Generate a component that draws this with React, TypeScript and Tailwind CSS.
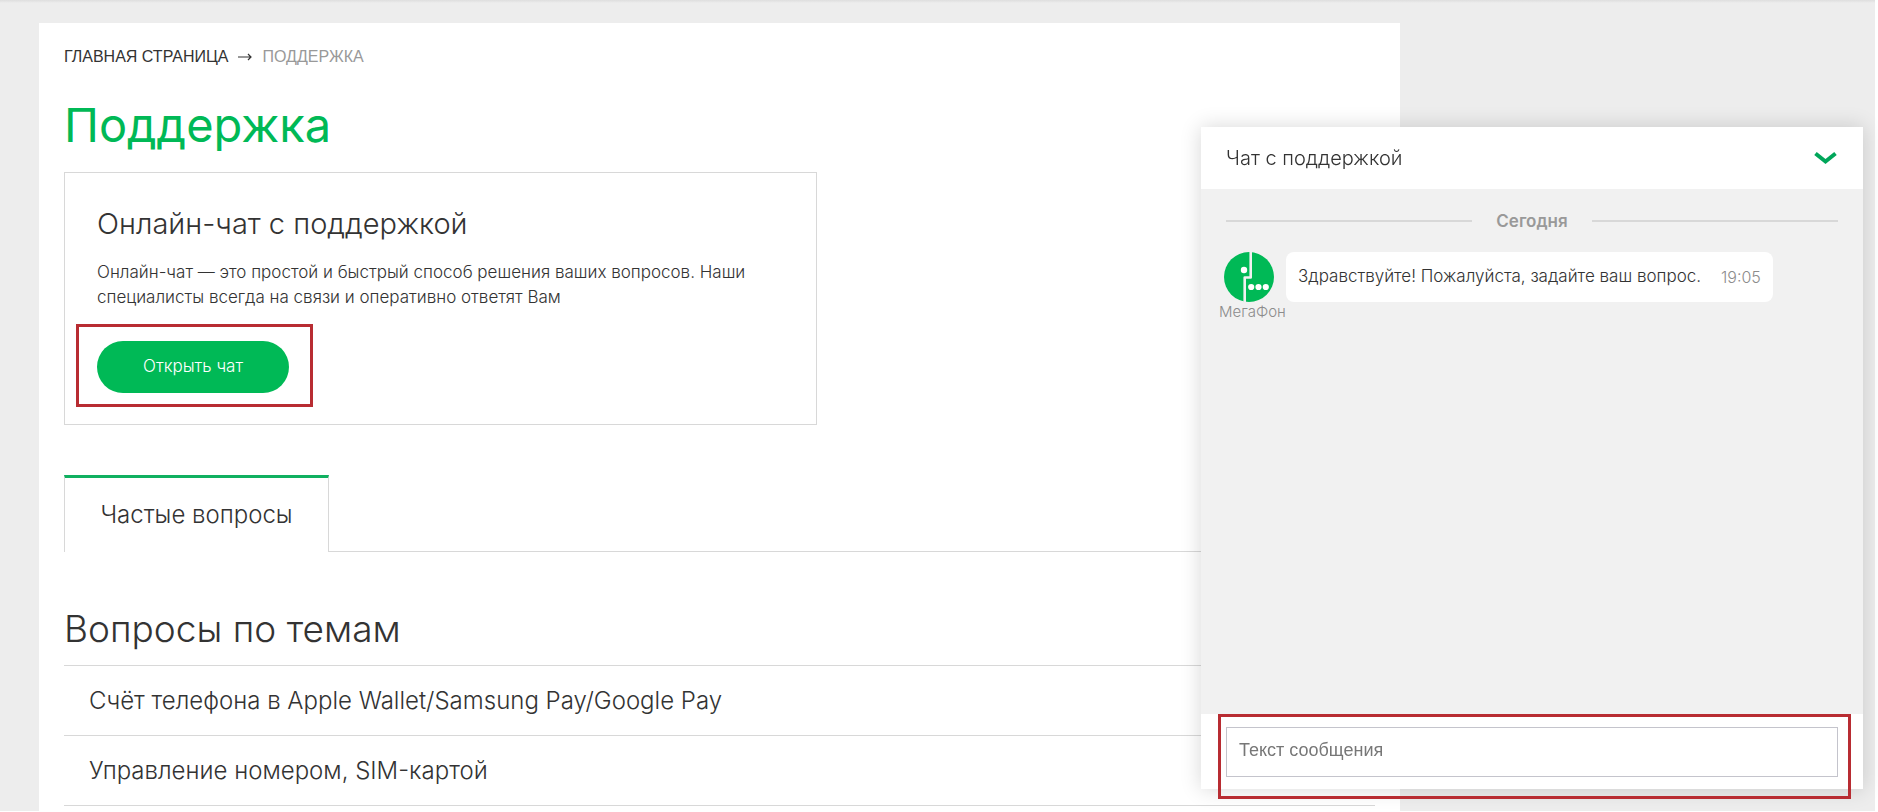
import React, { useState } from "react";

const topics = [
  "Счёт телефона в Apple Wallet/Samsung Pay/Google Pay",
  "Управление номером, SIM-картой",
];

const MegafonLogo = () => (
  <svg viewBox="0 0 50 50" className="ml-[5px] size-[50px]" aria-hidden="true">
    <circle cx="25" cy="25" r="25" fill="#00b956" />
    <path
      d="M26.7 0V25.5H20.7V50"
      fill="none"
      stroke="#f1f1f1"
      strokeWidth="2.6"
      strokeLinejoin="round"
    />
    <circle cx="20" cy="18" r="3.2" fill="#fff" />
    <circle cx="27.2" cy="35" r="3.1" fill="#fff" />
    <circle cx="34.5" cy="35" r="3.1" fill="#fff" />
    <circle cx="41.8" cy="35" r="3.1" fill="#fff" />
  </svg>
);

const Breadcrumbs = () => (
  <nav className="flex items-center gap-2.5 font-['Liberation_Sans',sans-serif] text-base leading-6 uppercase">
    <a href="#home">Главная страница</a>
    <svg viewBox="0 0 14 8" className="h-2 w-3.5" aria-hidden="true">
      <path
        d="M0 4H13M10 1L13 4L10 7"
        fill="none"
        stroke="#333"
        strokeWidth="1.2"
      />
    </svg>
    <span className="text-[#999]">Поддержка</span>
  </nav>
);

const ChatCard = () => (
  <section className="mt-4 w-full max-w-[753px] border border-[#d8d8d8] px-8 py-[31px]">
    <h2 className="text-[29px] leading-10 font-light">
      Онлайн-чат с поддержкой
    </h2>
    <p className="mt-4 text-[17px] leading-[25px] font-light">
      Онлайн-чат — это простой и быстрый способ решения ваших вопросов. Наши
      специалисты всегда на связи и оперативно ответят Вам
    </p>
    <div className="relative mt-[31px] w-fit">
      <button
        type="button"
        className="block h-[52px] w-48 rounded-full bg-[#00b956] text-[17px] font-light text-white"
      >
        Открыть чат
      </button>
      <div className="pointer-events-none absolute -top-[17px] -right-6 -bottom-3.5 -left-[21px] border-3 border-[#b82c32]" />
    </div>
  </section>
);

const ChatWidget = () => {
  const [message, setMessage] = useState("");

  return (
    <aside className="fixed right-[15px] bottom-[23px] flex h-[662px] w-[662px] flex-col bg-white shadow-[0_0_20px_rgba(0,0,0,0.16)]">
      <header className="flex h-[62px] shrink-0 items-center justify-between px-[25px]">
        <h2 className="text-xl font-light">Чат с поддержкой</h2>
        <button type="button" aria-label="Свернуть чат">
          <svg viewBox="0 0 24 14" className="h-3.5 w-6" aria-hidden="true">
            <path
              d="M1.5 2.5L11.5 10.5L21.5 2.5"
              fill="none"
              stroke="#00a65a"
              strokeWidth="4"
            />
          </svg>
        </button>
      </header>

      <div className="grow bg-[#f1f1f1] pt-5">
        <div className="flex items-center gap-6 px-[25px] text-[17px] leading-6 font-semibold text-[#999]">
          <span className="h-0.5 grow bg-[#d8d8d8]" />
          Сегодня
          <span className="h-0.5 grow bg-[#d8d8d8]" />
        </div>
        <div className="mt-[19px] flex items-start pl-[18px]">
          <div className="flex w-[67px] flex-col">
            <MegafonLogo />
            <span className="text-[15px] leading-5 font-light text-[#8c8c8c]">
              МегаФон
            </span>
          </div>
          <p className="flex h-[50px] items-center gap-5 rounded-lg bg-white px-3 text-[17px] font-light">
            Здравствуйте! Пожалуйста, задайте ваш вопрос.
            <time className="text-base text-[#8c8c8c]">19:05</time>
          </p>
        </div>
      </div>

      <form className="relative h-[75px] shrink-0 px-[25px] pt-[13px]">
        <input
          type="text"
          aria-label="Текст сообщения"
          placeholder="Текст сообщения"
          value={message}
          onChange={(e) => setMessage(e.target.value)}
          className="h-[50px] w-full border border-[#c4c4cc] px-3 pb-1 font-['Liberation_Sans',sans-serif] text-lg placeholder:text-[#777]"
        />
        <div className="pointer-events-none absolute top-0 right-3 -bottom-2.5 left-[17px] border-3 border-[#b82c32]" />
      </form>
    </aside>
  );
};

const App = () => {
  return (
    <div className="min-h-screen border-r-3 border-b border-white bg-[#ededed] font-['Inter',sans-serif] text-[#333]">
      <div className="h-[3px] bg-gradient-to-b from-[#dedede] to-[#ededed]" />
      <main className="mt-5 ml-[39px] max-w-[1361px] bg-white px-[25px] pt-[22px] pb-[5px]">
        <Breadcrumbs />
        <h1 className="mt-[25px] text-[47px] leading-[62px] text-[#00b956]">
          Поддержка
        </h1>
        <ChatCard />

        <div className="mt-[50px] flex">
          <button
            type="button"
            className="h-[77px] w-[265px] border-x border-t-3 border-x-[#d8d8d8] border-t-[#10b060] text-2xl font-light"
          >
            Частые вопросы
          </button>
          <div className="grow border-b border-[#d8d8d8]" />
        </div>

        <h2 className="mt-[53px] text-[37px] leading-12 font-light">
          Вопросы по темам
        </h2>
        <ul className="mt-3 border-t border-[#d8d8d8]">
          {topics.map((topic) => (
            <li key={topic} className="border-b border-[#d8d8d8]">
              <a
                href="#topic"
                className="flex h-[69px] items-center px-[25px] text-2xl font-light"
              >
                {topic}
              </a>
            </li>
          ))}
        </ul>
      </main>
      <ChatWidget />
    </div>
  );
};

export default App;
